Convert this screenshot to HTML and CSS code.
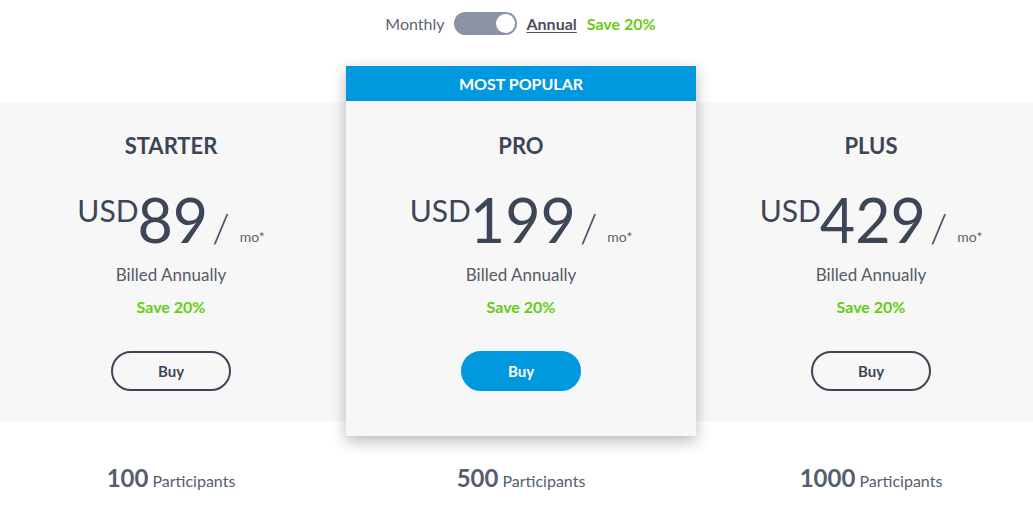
FILE: index.html
```html
<!DOCTYPE html>
<html>
<head>
<meta charset="utf-8">
<link rel="stylesheet" href="styles.css">
</head>
<body>
<div class="page">
  <div class="toggle-row">
    <span class="t-month">Monthly</span>
    <span class="switch"><span class="knob"></span></span>
    <span class="t-annual">Annual</span>
    <span class="t-save">Save 20%</span>
  </div>
  <div class="band">
    <div class="plans">
      <div class="plan">
        <h2 class="name">STARTER</h2>
        <div class="price"><span class="cur">USD</span><span class="num">89</span><span class="slash">/</span><span class="mo">mo*</span></div>
        <div class="billed">Billed Annually</div>
        <div class="save">Save 20%</div>
        <button class="buy">Buy</button>
      </div>
      <div class="plan popular">
        <div class="badge">MOST POPULAR</div>
        <h2 class="name">PRO</h2>
        <div class="price"><span class="cur">USD</span><span class="num">199</span><span class="slash">/</span><span class="mo">mo*</span></div>
        <div class="billed">Billed Annually</div>
        <div class="save">Save 20%</div>
        <button class="buy buy-primary">Buy</button>
      </div>
      <div class="plan">
        <h2 class="name">PLUS</h2>
        <div class="price"><span class="cur">USD</span><span class="num">429</span><span class="slash">/</span><span class="mo">mo*</span></div>
        <div class="billed">Billed Annually</div>
        <div class="save">Save 20%</div>
        <button class="buy">Buy</button>
      </div>
    </div>
  </div>
  <div class="features">
    <div class="feat"><b>100</b> Participants</div>
    <div class="feat"><b>500</b> Participants</div>
    <div class="feat"><b>1000</b> Participants</div>
  </div>
</div>
</body>
</html>
```
FILE: styles.css
```css
* { box-sizing: border-box; }
html, body { margin: 0; padding: 0; background: #fff; overflow: hidden; }
body { font-family: Lato, "Open Sans", sans-serif; color: #3f4756; }
.page { width: 1033px; }

.toggle-row {
  display: flex;
  justify-content: center;
  align-items: center;
  height: 46px;
  font-size: 16px;
  padding-left: 8px;
}
.t-month { color: #5d6372; margin-right: 9px; }
.switch {
  width: 63px; height: 23px; border-radius: 12px;
  background: #8a94a6;
  display: flex; align-items: center; justify-content: flex-end;
  padding-right: 2px;
  margin-right: 10px;
}
.knob { width: 19px; height: 19px; border-radius: 50%; background: #fff; }
.t-annual { font-weight: 700; color: #4a4f5c; text-decoration: underline; text-underline-offset: 2px; margin-right: 10px; }
.t-save { font-weight: 700; color: #66cc11; }

.band {
  margin-top: 56px;
  background: #f7f7f7;
  height: 319px;
}
.plans {
  display: grid;
  grid-template-columns: 350px 350px 350px;
  margin-left: -4px;
  width: 1050px;
}
.plan {
  display: flex;
  flex-direction: column;
  align-items: center;
  padding-top: 31px;
  height: 319px;
}
.popular {
  background: #f7f7f7;
  margin-top: -36px;
  height: 370px;
  padding-top: 0;
  box-shadow: 0 5px 14px rgba(0,0,0,0.28);
  position: relative;
  z-index: 1;
}
.badge {
  width: 100%;
  height: 35px;
  background: #0099e0;
  color: #fff;
  font-weight: 700;
  font-size: 16px;
  display: flex; align-items: center; justify-content: center;
  margin-bottom: 32px;
}
.name {
  margin: 0;
  font-size: 22px;
  font-weight: 700;
  line-height: 26px;
  color: #3d4656;
}
.price {
  margin-top: 29px;
  display: flex;
  align-items: baseline;
  color: #3d4656;
  height: 66px;
}
.cur { font-size: 30px; font-weight: 400; align-self: flex-start; line-height: 30px; margin-top: 7px; margin-right: -1px; }
.num { font-size: 61px; font-weight: 400; line-height: 64px; }
.slash { font-size: 40px; font-weight: 300; margin-left: 4px; }
.mo { font-size: 14px; color: #5d6372; margin-left: 10px; position: relative; top: -1px; }
.billed { margin-top: 10px; font-size: 17px; color: #555b68; line-height: 22px; }
.save { margin-top: 10px; font-size: 16px; font-weight: 700; color: #66cc11; line-height: 22px; }
.buy {
  margin-top: 33px;
  width: 120px; height: 40px;
  border-radius: 20px;
  border: 2px solid #3d4656;
  background: transparent;
  font-family: Lato, sans-serif;
  font-weight: 700;
  font-size: 15px;
  color: #3d4656;
}
.buy-primary { background: #0099e0; border-color: #0099e0; color: #fff; }

.features {
  display: grid;
  grid-template-columns: 350px 350px 350px;
  margin-left: -4px;
  width: 1050px;
  padding-top: 42px;
}
.feat { text-align: center; font-size: 16px; color: #555d6e; }
.feat b { font-size: 24px; font-weight: 700; color: #555d6e; }
```
